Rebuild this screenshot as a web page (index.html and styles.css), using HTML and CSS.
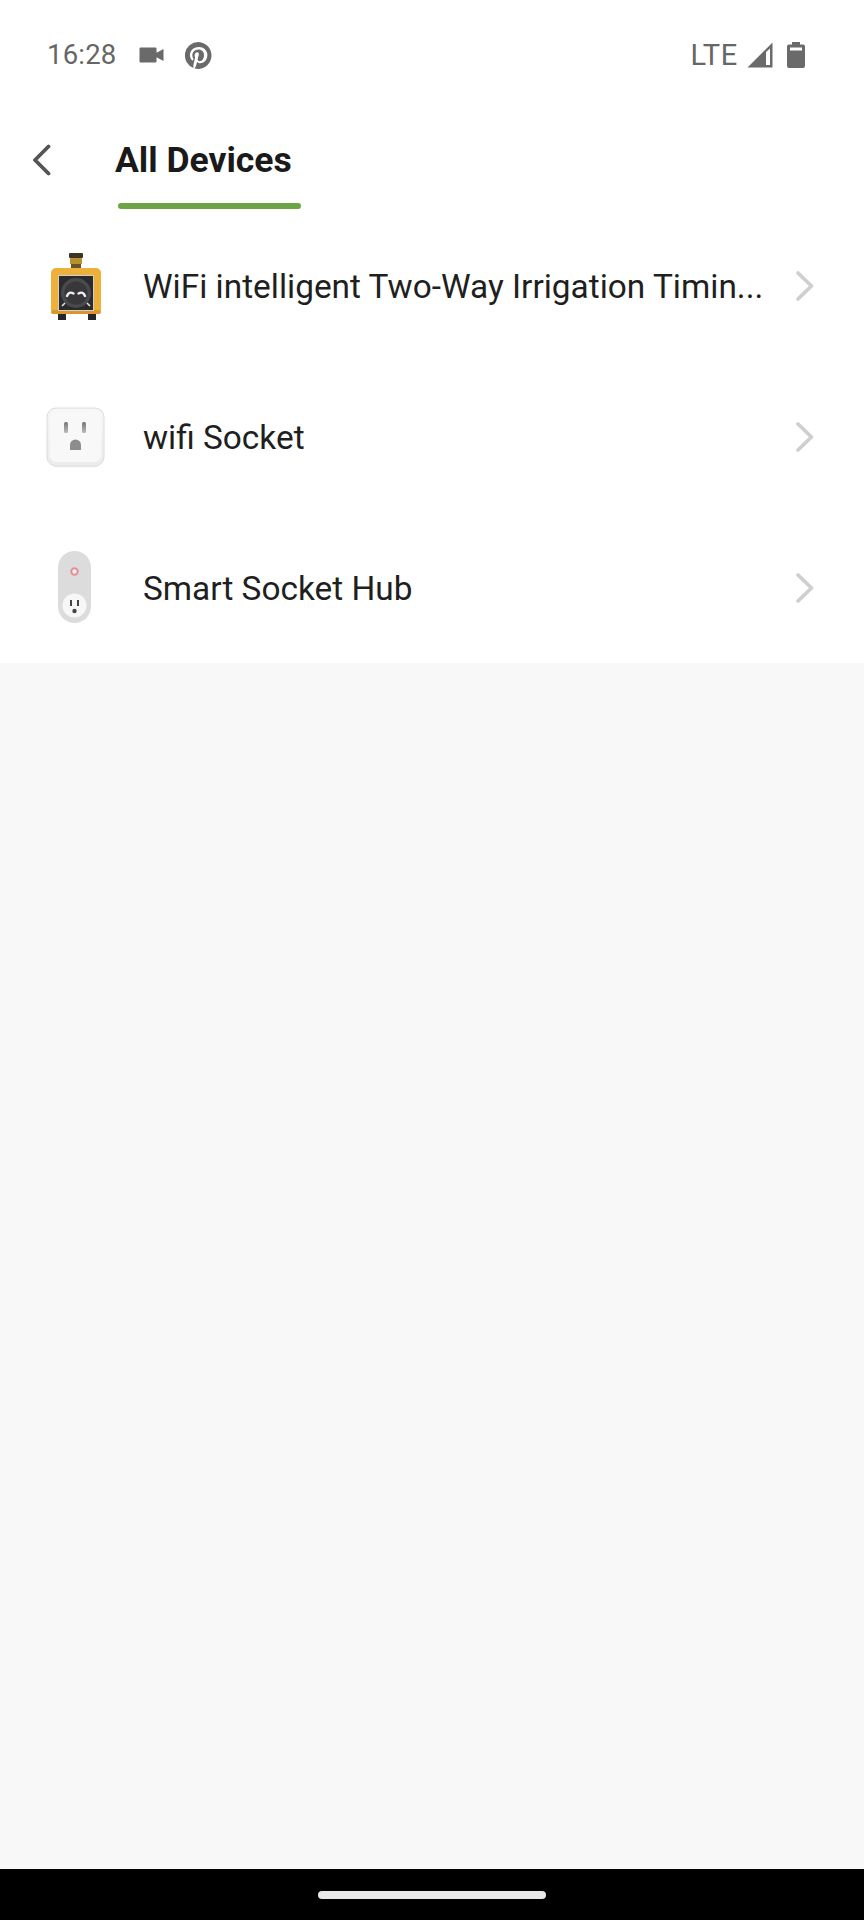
FILE: index.html
```html
<!DOCTYPE html>
<html lang="en">
<head>
<meta charset="utf-8">
<title>All Devices</title>
<link rel="stylesheet" href="styles.css">
</head>
<body>
<div class="app">
  <div class="status">
    <div class="status-left">
      <span class="time">16:28</span>
      <svg class="ic-video" width="26" height="18" viewBox="0 0 26 18"><path fill="#6a6a6a" d="M1.500 1.500h15a1 1 0 0 1 1 1v4.200l7-3.700v12l-7-3.700v4.200a1 1 0 0 1-1 1h-15a1 1 0 0 1-1-1v-13a1 1 0 0 1 1-1z"/></svg>
      <svg class="ic-pin" width="27" height="27" viewBox="0 0 24 24"><path fill="#6a6a6a" fill-rule="evenodd" d="M12 0a12 12 0 0 0-4.400 23.200c-.1-.9-.2-2.400 0-3.400l1.400-6s-.4-.7-.4-1.800c0-1.700 1-2.900 2.200-2.900 1 0 1.500.8 1.500 1.700 0 1-.7 2.600-1 4-.3 1.200.6 2.200 1.800 2.200 2.100 0 3.800-2.300 3.800-5.500 0-2.900-2.100-4.900-5-4.900-3.400 0-5.400 2.600-5.400 5.200 0 1 .4 2.100.9 2.700.1.100.1.200.1.300l-.3 1.400c-.1.200-.2.300-.4.200-1.500-.7-2.400-2.900-2.400-4.700 0-3.800 2.800-7.300 8-7.300 4.200 0 7.500 3 7.500 7 0 4.200-2.600 7.500-6.300 7.500-1.200 0-2.400-.6-2.800-1.400l-.8 2.900c-.3 1.100-1 2.400-1.500 3.200A12 12 0 1 0 12 0z"/></svg>
    </div>
    <div class="status-right">
      <span class="lte">LTE</span>
      <svg class="ic-signal" width="26" height="26" viewBox="0 0 26 26"><path fill="#6a6a6a" fill-rule="evenodd" d="M25.500 .5v25H.5zM19 10v13h4V6.500z"/></svg>
      <svg class="ic-batt" width="18" height="26" viewBox="0 0 18 26"><path fill="#6a6a6a" fill-rule="evenodd" d="M5 0h8v2.500h3a2 2 0 0 1 2 2V24a2 2 0 0 1-2 2H2a2 2 0 0 1-2-2V4.500a2 2 0 0 1 2-2h3zM3 5.500v3h12v-3z"/></svg>
    </div>
  </div>

  <header class="header">
    <svg class="back" width="20" height="32" viewBox="0 0 20 32"><path fill="none" stroke="#555" stroke-width="3.800" stroke-linecap="round" stroke-linejoin="round" d="M16.500 2.500 3 16l13.500 13.500"/></svg>
    <div class="tab">
      <h1 class="title">All Devices</h1>
      <div class="underline"></div>
    </div>
  </header>

  <ul class="list">
    <li class="row">
      <svg class="thumb" width="60" height="70" viewBox="0 0 60 70">
        <rect x="24" y="2" width="14" height="5" rx="1" fill="#3c3524"/>
        <rect x="25" y="7" width="12" height="6" fill="#b8902f"/>
        <rect x="26" y="13" width="10" height="4" fill="#6a5426"/>
        <rect x="6" y="17" width="50" height="46" rx="5" fill="#edb03a"/>
        <rect x="6" y="59" width="50" height="4" rx="2" fill="#d9962c"/>
        <rect x="13" y="24" width="36" height="36" fill="#d2cfc4"/>
        <rect x="14" y="25" width="34" height="34" fill="#2b2b2d"/>
        <circle cx="31" cy="42" r="15" fill="#4a4a4d"/>
        <circle cx="31" cy="42" r="11.500" fill="#38383b"/>
        <path d="M22 45q2-5 6.500-2.500M33.500 42.500q4.500-2.500 6.500 2.500" fill="none" stroke="#f0f0f0" stroke-width="2.400" stroke-linecap="round"/>
        <path d="M17 55l3-3M45 55l-3-3" stroke="#e8e8e8" stroke-width="1.500"/>
        <rect x="13" y="63" width="8" height="6" fill="#26262a"/>
        <rect x="43" y="63" width="8" height="6" fill="#26262a"/>
      </svg>
      <span class="name">WiFi intelligent Two-Way Irrigation Timin...</span>
      <svg class="chev" width="20" height="32" viewBox="0 0 20 32"><path fill="none" stroke="#cfcfcf" stroke-width="3.800" stroke-linecap="round" stroke-linejoin="round" d="M3 3l13.500 13L3 29"/></svg>
    </li>
    <li class="row">
      <svg class="thumb" width="60" height="66" viewBox="0 0 60 66">
        <defs>
          <linearGradient id="plate" x1="0" y1="0" x2="0" y2="1"><stop offset="0" stop-color="#f6f6f6"/><stop offset="1" stop-color="#ececec"/></linearGradient>
          <linearGradient id="slot" x1="0" y1="0" x2="0" y2="1"><stop offset="0" stop-color="#777"/><stop offset="1" stop-color="#bbb"/></linearGradient>
        </defs>
        <rect x="8" y="61" width="45" height="3" rx="1.500" fill="#f6f6f6"/>
        <rect x="2" y="4" width="57" height="58" rx="9" fill="url(#plate)" stroke="#dcdcdc" stroke-width="1"/>
        <rect x="5" y="6" width="51" height="52" rx="7" fill="#f8f8f8"/>
        <rect x="19" y="18" width="4" height="11" rx="1.500" fill="url(#slot)"/>
        <rect x="37" y="18" width="4" height="11" rx="1.500" fill="url(#slot)"/>
        <path d="M25 46v-5a5.500 5.500 0 0 1 11 0v5z" fill="#8d8d8d"/>
      </svg>
      <span class="name">wifi Socket</span>
      <svg class="chev" width="20" height="32" viewBox="0 0 20 32"><path fill="none" stroke="#cfcfcf" stroke-width="3.800" stroke-linecap="round" stroke-linejoin="round" d="M3 3l13.500 13L3 29"/></svg>
    </li>
    <li class="row">
      <svg class="thumb" width="60" height="74" viewBox="0 0 60 74">
        <rect x="13" y="0" width="33" height="72" rx="16.500" fill="#dcdcdc"/>
        <circle cx="29.500" cy="20.500" r="3.200" fill="#f6f6f6" stroke="#e98b94" stroke-width="2"/>
        <circle cx="29.500" cy="54.500" r="12" fill="#f7f7f7"/>
        <rect x="25" y="49" width="2" height="6" fill="#444"/>
        <rect x="32" y="49" width="2" height="6" fill="#444"/>
        <circle cx="29.500" cy="60" r="2.200" fill="#444"/>
      </svg>
      <span class="name">Smart Socket Hub</span>
      <svg class="chev" width="20" height="32" viewBox="0 0 20 32"><path fill="none" stroke="#cfcfcf" stroke-width="3.800" stroke-linecap="round" stroke-linejoin="round" d="M3 3l13.500 13L3 29"/></svg>
    </li>
  </ul>

  <main class="empty"></main>

  <nav class="navbar"><div class="home"></div></nav>
</div>
</body>
</html>
```
FILE: styles.css
```css
* { box-sizing: border-box; }
html, body { margin: 0; padding: 0; }
body { font-family: Roboto, "Liberation Sans", sans-serif; background: #f8f8f8; }
.app { width: 864px; height: 1920px; display: flex; flex-direction: column; overflow: hidden; }

.status { height: 110px; background: #fff; display: flex; justify-content: space-between; align-items: flex-start; padding: 39px 59px 0 47px; flex: none; }
.status-left { display: flex; align-items: center; height: 32px; }
.time { font-size: 27.500px; color: #666; line-height: 32px; letter-spacing: .2px; }
.ic-video { margin-left: 23px; }
.ic-pin { margin-left: 20px; }
.status-right { display: flex; align-items: center; height: 32px; }
.lte { font-size: 29px; color: #666; line-height: 32px; letter-spacing: .7px; }
.ic-signal { margin-left: 9px; }
.ic-batt { margin-left: 14px; }

.header { height: 100px; background: #fff; display: flex; align-items: flex-start; padding-left: 32px; flex: none; }
.back { margin-top: 34px; flex: none; }
.tab { margin-left: 63px; display: flex; flex-direction: column; align-items: flex-start; }
.title { margin: 26px 0 0; font-size: 35.500px; line-height: 48px; font-weight: 700; color: #1a1a1a; }
.underline { width: 183px; height: 6px; border-radius: 3px; background: #6ea544; margin: 19px 0 0 3px; }

.list { list-style: none; margin: 0; padding: 0; background: #fff; flex: none; }
.row { height: 151px; display: flex; align-items: center; padding: 0 49px 0 45px; }
.thumb { flex: none; width: 60px; }
.name { flex: 1; margin: 2px 0 0 38px; font-size: 33.400px; line-height: 40px; color: #1f1f1f; white-space: nowrap; overflow: hidden; }
.chev { flex: none; }

.empty { flex: 1; background: #f8f8f8; }
.navbar { height: 51px; background: #000; flex: none; display: flex; justify-content: center; padding-top: 22px; }
.home { width: 228px; height: 8px; border-radius: 4px; background: #e8e8e8; }
```
